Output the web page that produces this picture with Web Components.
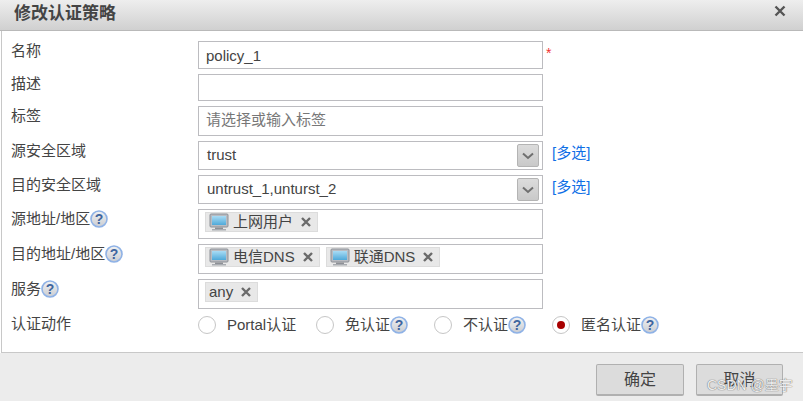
<!DOCTYPE html>
<html lang="zh"><head><meta charset="utf-8"><title>修改认证策略</title>
<style>
html,body{margin:0;padding:0;height:401px;overflow:hidden;background:#fff}
body{font:15px/20px "Liberation Sans","Noto Sans CJK SC",sans-serif;color:#444}
</style></head><body>
<fw-dialog heading="修改认证策略">
  <fw-row label="名称" h="28"><fw-input value="policy_1"></fw-input><span slot="after" style="color:#f03030;font-size:14px;margin:-5px 0 0 3px">*</span></fw-row>
  <fw-row label="描述" h="27"><fw-input></fw-input></fw-row>
  <fw-row label="标签" h="30"><fw-input placeholder="请选择或输入标签"></fw-input></fw-row>
  <fw-row label="源安全区域" h="29"><fw-select value="trust"></fw-select><fw-link slot="after">[多选]</fw-link></fw-row>
  <fw-row label="目的安全区域" h="29"><fw-select value="untrust_1,unturst_2"></fw-select><fw-link slot="after">[多选]</fw-link></fw-row>
  <fw-row label="源地址/地区" help h="30"><fw-tags><fw-tag icon>上网用户</fw-tag></fw-tags></fw-row>
  <fw-row label="目的地址/地区" help h="30"><fw-tags><fw-tag icon>电信DNS</fw-tag><fw-tag icon>联通DNS</fw-tag></fw-tags></fw-row>
  <fw-row label="服务" help h="30"><fw-tags><fw-tag>any</fw-tag></fw-tags></fw-row>
  <fw-row label="认证动作" h="22" class="last">
    <fw-radios>
      <fw-radio>Portal认证</fw-radio>
      <fw-radio help>免认证</fw-radio>
      <fw-radio help>不认证</fw-radio>
      <fw-radio help checked>匿名认证</fw-radio>
    </fw-radios>
  </fw-row>
  <fw-button slot="footer" style="width:88px">确定</fw-button>
  <fw-button slot="footer">取消</fw-button>
</fw-dialog>
<script>
const def=(name,css,html,init)=>customElements.define(name,class extends HTMLElement{
  constructor(){super();this.attachShadow({mode:'open'})}
  connectedCallback(){
    const a=n=>this.getAttribute(n);
    this.shadowRoot.innerHTML=`<style>${css}</style>`+(typeof html==='function'?html(a,this):html);
    if(init)init(this,a);
  }
});
def('fw-help',`:host{display:inline-block;width:18px;height:18px;flex:none}svg{display:block}text{font:bold 14px "Liberation Sans",sans-serif}`,
()=>`<svg width="18" height="18" viewBox="0 0 18 18"><defs><linearGradient id="h" x1="0" y1="0" x2="0" y2="1"><stop offset="0" stop-color="#f2f2f2"/><stop offset="1" stop-color="#c9ccd2"/></linearGradient></defs><circle cx="9" cy="9" r="8" fill="url(#h)" stroke="#8fb2e6" stroke-width="1.6"/><text x="9" y="14" text-anchor="middle" fill="#3f659f">?</text></svg>`);
def('fw-dialog',`
:host{display:flex;flex-direction:column;height:401px;width:803px;position:relative}
header{height:30px;flex:none;display:flex;align-items:center;justify-content:space-between;padding:0 17px 0 14px;background:linear-gradient(#eeeeee,#d0d0d0);border-bottom:1px solid #b9b9b9}
h1{margin:-3px 0 0;font:bold 17px/20px "Liberation Sans","Noto Sans CJK SC",sans-serif;color:#444}
svg{display:block;margin-top:-8px}
main{flex:none;height:322px;box-sizing:border-box;margin-left:1px;border-left:1px solid #c8c8c8;border-bottom:1px solid #c8c8c8;padding:10px 0 0 9px;display:flex;flex-direction:column;gap:5px;background:#fff}
footer{flex:1;background:#ececec;display:flex;justify-content:flex-end;gap:12px;padding:11px 20px 0 0;box-sizing:border-box}
.wm{position:absolute;left:707px;top:375px;font:14px/20px "Liberation Sans","Noto Sans CJK SC",sans-serif;color:rgba(255,255,255,.9);text-shadow:0 0 1px #666,0 0 1px #888;white-space:nowrap}
`,a=>`<header><h1>${a('heading')}</h1><svg width="12" height="12" viewBox="0 0 12 12"><path d="M1.5 1.5 10.5 10.5M10.5 1.5 1.5 10.5" stroke="#555" stroke-width="2.4"/></svg></header><main><slot></slot></main><footer><slot name="footer"></slot></footer><div class="wm">CSDN @墨宇</div>`);
def('fw-row',`
:host{display:flex;align-items:flex-start}
.l{width:187px;flex:none;display:flex;align-items:center;white-space:nowrap;color:#444}
.f{width:345px;flex:none;display:flex;height:100%}
:host(.last) .f{width:auto}
.a{display:flex;align-items:center;height:100%}
`,(a,t)=>`<div class="l">${a('label')}${t.hasAttribute('help')?'<fw-help></fw-help>':''}</div><div class="f"><slot></slot></div><div class="a"><slot name="after"></slot></div>`,
(t,a)=>{t.style.height=a('h')+'px'});
def('fw-input',`
:host{display:flex;align-items:center;box-sizing:border-box;width:100%;height:100%;border:1px solid #bcbcc0;padding:0 7px;background:#fff;color:#444}
.p{color:#777;margin-top:-3px}
.v{margin-top:1px}
`,a=>a('placeholder')?`<span class="p">${a('placeholder')}</span>`:`<span class="v">${a('value')||''}</span>`);
def('fw-select',`
:host{display:flex;align-items:center;justify-content:space-between;box-sizing:border-box;width:100%;height:100%;border:1px solid #bcbcc0;padding:0 3px 0 8px;background:#fff;color:#444}
.v{margin-top:-2px}
.b{width:22px;height:23px;box-sizing:border-box;border:1px solid #b4b4b4;border-radius:2px;background:linear-gradient(#dcdcdc,#c9c9c9);display:flex;align-items:center;justify-content:center}
`,a=>`<span class="v">${a('value')}</span><span class="b"><svg width="12" height="8" viewBox="0 0 12 8"><path d="M1 1.5 6 6 11 1.5" fill="none" stroke="#6f6f6f" stroke-width="2"/></svg></span>`);
def('fw-link',`:host{display:block;margin:-6px 0 0 9px;color:#0f6fe6;white-space:nowrap}`,`<slot></slot>`);
def('fw-tags',`:host{display:flex;gap:6px;align-items:flex-start;box-sizing:border-box;width:100%;height:100%;border:1px solid #bcbcc0;padding:2px 0 0 6px;background:#fff}`,`<slot></slot>`);
def('fw-tag',`
:host{display:inline-flex;align-items:center;height:20px;box-sizing:border-box;border:1px solid #dcdcdc;background:#e8e8e8;padding:0 6px 0 3px;color:#444;white-space:nowrap}
.m{display:block;margin-right:4px}
.x{display:block;margin-left:8px}
`,(a,t)=>`${t.hasAttribute('icon')?`<svg class="m" width="20" height="18" viewBox="0 0 20 18"><defs><linearGradient id="s" x1="0" y1="0" x2="0" y2="1"><stop offset="0" stop-color="#a9dcf5"/><stop offset="1" stop-color="#4fa9d9"/></linearGradient></defs><rect x="1" y="1" width="18" height="13" rx="1" fill="#b9bcc2" stroke="#8d9096"/><rect x="3" y="3" width="14" height="9" fill="url(#s)"/><rect x="6" y="14.5" width="8" height="1.5" fill="#8d9096"/><rect x="3" y="16" width="14" height="1.5" fill="#a8abb0"/></svg>`:''}<slot></slot><svg class="x" width="10" height="10" viewBox="0 0 10 10"><path d="M1 1 9 9M9 1 1 9" stroke="#6a6a6a" stroke-width="2.4"/></svg>`);
def('fw-radios',`:host{display:grid;grid-template-columns:118px 118px 118px auto;height:22px}`,`<slot></slot>`);
def('fw-radio',`
:host{display:flex;align-items:center;color:#444;white-space:nowrap}
.c{width:18px;height:18px;box-sizing:border-box;border:1.5px solid #c6c6c6;border-radius:50%;background:#fff;margin:0 11px 0 0;display:flex;align-items:center;justify-content:center;flex:none}
.d{width:8px;height:8px;border-radius:50%;background:#a80000}
`,(a,t)=>`<span class="c">${t.hasAttribute('checked')?'<span class="d"></span>':''}</span><slot></slot>${t.hasAttribute('help')?'<fw-help></fw-help>':''}`);
def('fw-button',`
:host{display:flex;align-items:center;justify-content:center;width:87px;height:32px;box-sizing:border-box;border:1px solid #b0b0b0;border-bottom-width:2px;border-radius:2px;background:#dcdcdc;color:#444;font-size:16px}
`,`<slot></slot>`);
</script>
</body></html>
